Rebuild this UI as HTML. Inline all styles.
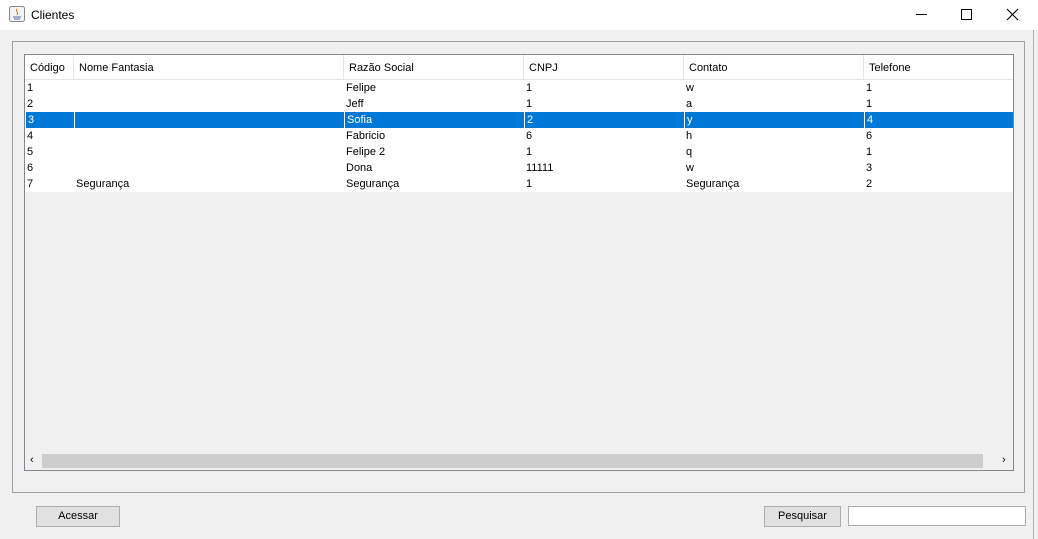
<!DOCTYPE html>
<html><head><meta charset="utf-8"><style>
*{margin:0;padding:0;box-sizing:border-box}
body{width:1038px;height:539px;background:#f0f0f0;font-family:"Liberation Sans",sans-serif;font-size:11px;color:#000;position:relative;overflow:hidden}
.title{position:absolute;left:0;top:0;width:1038px;height:30px;background:#fff}
.abs{position:absolute}
.panel{left:12px;top:41px;width:1013px;height:452px;border:1px solid #a0a0a0}
.table{left:24px;top:54px;width:990px;height:417px;border:1px solid #828790;background:#f0f0f0}
.hdr{position:absolute;left:0;top:0;height:25px;width:988px;background:#fff;border-bottom:1px solid #e5e5e5}
.hdr div{position:absolute;top:0;height:25px;line-height:27px;padding-left:5px;border-right:1px solid #e5e5e5}
.row{position:absolute;left:0;width:988px;height:16px;background:#fff}
.row div{position:absolute;top:0;height:16px;line-height:16px;padding-left:2px}
.sel{background:#0078d7;color:#fff}
.sel div{border-left:1px solid #fff}
.btn{background:#e1e1e1;border:1px solid #adadad;text-align:center;line-height:19px;font-size:11px}
</style></head><body>
<div class="title">
 <svg class="abs" style="left:9px;top:6px" width="16" height="16"><rect x="0.5" y="0.5" width="15" height="15" rx="2" fill="#f4f4f4" stroke="#888"/><path d="M4 11h8M5 13h6" stroke="#4a6a9a"/><path d="M8 3c-2 2 2 3 0 6" stroke="#e07020" fill="none"/></svg>
 <div class="abs" style="left:31px;top:8px;font-size:12px">Clientes</div>
 <div class="abs" style="left:916px;top:14px;width:11px;height:1px;background:#000"></div>
 <div class="abs" style="left:961px;top:9px;width:11px;height:11px;border:1px solid #000"></div>
 <svg class="abs" style="left:1006px;top:8px" width="13" height="13"><path d="M1 1L12 12M12 1L1 12" stroke="#000" stroke-width="1.1"/></svg>
</div>
<div class="abs" style="left:1033px;top:30px;width:1px;height:509px;background:#b0b0b0"></div>
<div class="abs panel"></div>
<div class="abs table">
 <div class="hdr">
  <div style="left:0;width:49px">Código</div>
  <div style="left:49px;width:270px">Nome Fantasia</div>
  <div style="left:319px;width:180px">Razão Social</div>
  <div style="left:499px;width:160px">CNPJ</div>
  <div style="left:659px;width:180px">Contato</div>
  <div style="left:839px;width:149px;border:none">Telefone</div>
 </div>
 <div id="rows"></div>
 <div class="abs" style="left:0;top:397px;width:988px;height:18px;background:#f0f0f0">
  <div class="abs" style="left:5px;top:2px;font-size:11px">‹</div>
  <div class="abs" style="left:17px;top:2px;width:941px;height:14px;background:#cdcdcd"></div>
  <div class="abs" style="left:977px;top:2px;font-size:11px">›</div>
 </div>
</div>
<div class="abs btn" style="left:36px;top:506px;width:84px;height:21px">Acessar</div>
<div class="abs btn" style="left:764px;top:506px;width:77px;height:21px">Pesquisar</div>
<div class="abs" style="left:848px;top:506px;width:178px;height:20px;background:#fff;border:1px solid #adadad"></div>
<script>
var d=[["1","","Felipe","1","w","1"],["2","","Jeff","1","a","1"],["3","","Sofia","2","y","4"],["4","","Fabricio","6","h","6"],["5","","Felipe 2","1","q","1"],["6","","Dona","11111","w","3"],["7","Segurança","Segurança","1","Segurança","2"]];
var L=[0,49,319,499,659,839],h="";
d.forEach(function(r,i){h+='<div class="row'+(i==2?' sel':'')+'" style="top:'+(25+i*16)+'px">';r.forEach(function(c,j){h+='<div style="left:'+L[j]+'px">'+c+'</div>'});h+='</div>'});
document.getElementById('rows').innerHTML=h;
</script>
</body></html>
